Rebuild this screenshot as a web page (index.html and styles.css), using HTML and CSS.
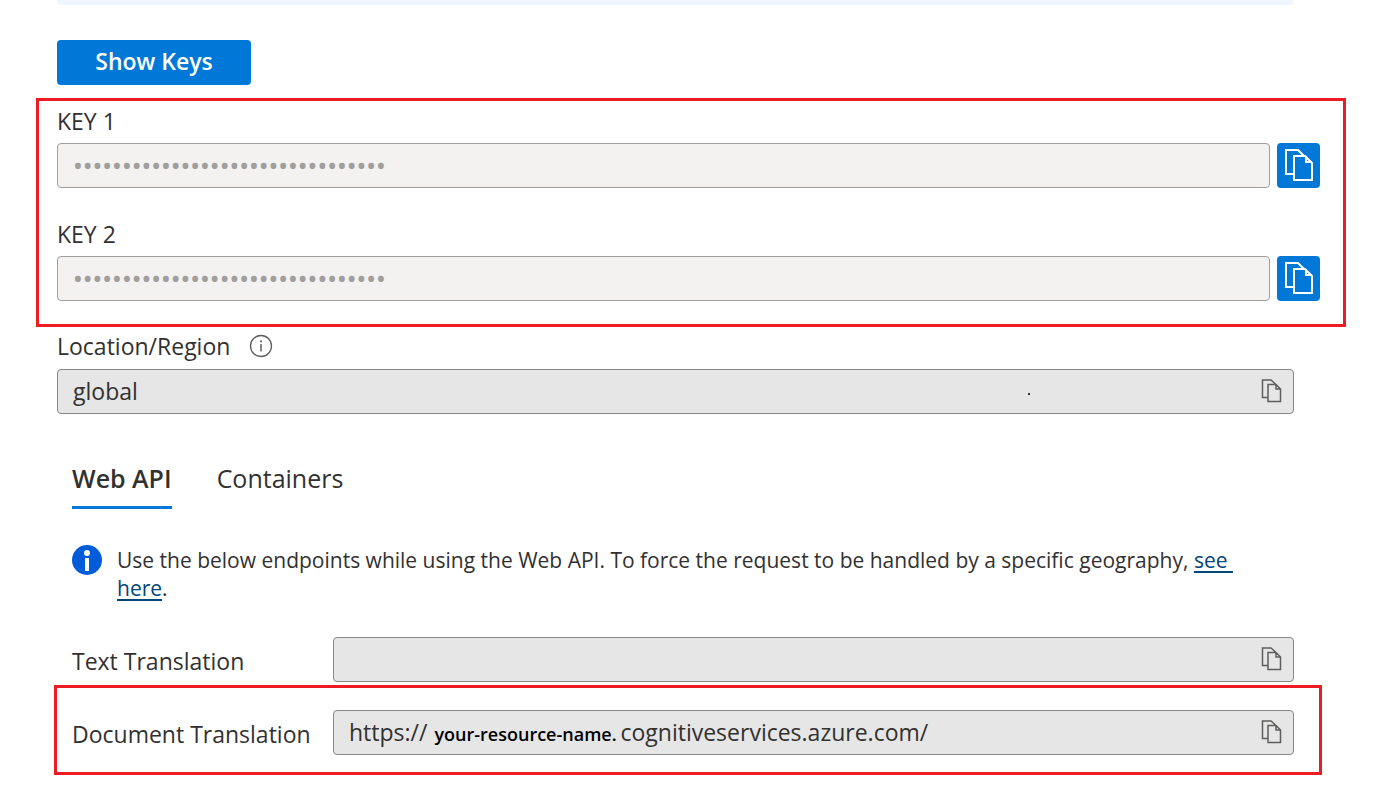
FILE: index.html
```html
<!DOCTYPE html>
<html lang="en">
<head>
<meta charset="utf-8">
<title>Keys and Endpoint</title>
<meta name="viewport" content="width=device-width, initial-scale=1">
<link rel="stylesheet" href="styles.css">
</head>
<body>
<svg class="sprite" aria-hidden="true">
  <symbol id="copy-large" viewBox="0 0 28 32">
    <path d="M8 25H1V1H13L19 7M9 7H20L27 14V31H9ZM21 7V13H27" fill="none" stroke="currentColor" stroke-width="2"/>
  </symbol>
  <symbol id="copy-small" viewBox="0 0 20 24">
    <path d="M6 18.500H1V1H9.500L14 5M6.500 5.500H14.500L19 10V22.500H6.500ZM14.500 5.500V10H19" fill="none" stroke="currentColor" stroke-width="1.500"/>
  </symbol>
</svg>
<main class="page">
  <div class="banner"></div>
  <button class="show-keys" type="button">Show Keys</button>

  <section class="keys">
    <label class="label" for="key1">KEY 1</label>
    <div class="key-row">
      <input class="key-input" id="key1" type="password" value="00000000000000000000000000000000" disabled>
      <button class="copy-key" type="button" aria-label="Copy key 1"><svg class="icon-large"><use href="#copy-large"/></svg></button>
    </div>
    <label class="label second" for="key2">KEY 2</label>
    <div class="key-row">
      <input class="key-input" id="key2" type="password" value="00000000000000000000000000000000" disabled>
      <button class="copy-key" type="button" aria-label="Copy key 2"><svg class="icon-large"><use href="#copy-large"/></svg></button>
    </div>
  </section>

  <section class="location">
    <div class="location-head">
      <label class="label" for="region">Location/Region</label>
      <svg class="hint" viewBox="0 0 24 24" aria-hidden="true"><circle cx="12" cy="12" r="10.500" fill="none" stroke="currentColor" stroke-width="1.300"/><circle cx="12" cy="7.300" r="1.100" fill="currentColor"/><path d="M12 10V17.500" stroke="currentColor" stroke-width="1.500"/></svg>
    </div>
    <div class="field">
      <input class="field-input" id="region" type="text" value="global" readonly>
      <span class="speck"></span>
      <button class="copy" type="button" aria-label="Copy region"><svg class="icon-small"><use href="#copy-small"/></svg></button>
    </div>
  </section>

  <nav class="tabs">
    <button class="tab active" type="button">Web API</button>
    <button class="tab" type="button">Containers</button>
  </nav>

  <div class="notice">
    <svg class="info" viewBox="0 0 30 30" aria-hidden="true"><circle cx="15" cy="15" r="15" fill="#015cda"/><circle cx="15" cy="8" r="3" fill="#fff"/><rect x="13" y="13" width="4" height="13" fill="#fff"/></svg>
    <p class="notice-text">Use the below endpoints while using the Web API. To force the request to be handled by a specific geography, <a class="link" href="#">see&nbsp;<br>here</a>.</p>
  </div>

  <div class="endpoint plain">
    <label class="endpoint-label" for="text-url">Text Translation</label>
    <div class="field">
      <input class="field-input" id="text-url" type="text" value="" readonly>
      <button class="copy" type="button" aria-label="Copy text endpoint"><svg class="icon-small"><use href="#copy-small"/></svg></button>
    </div>
  </div>
  <div class="endpoint marked">
    <label class="endpoint-label" for="doc-url">Document Translation</label>
    <div class="field">
      <span class="scheme">https://</span>
      <input class="resource" id="doc-url" type="text" value="your-resource-name." readonly>
      <span class="domain">cognitiveservices.azure.com/</span>
      <button class="copy" type="button" aria-label="Copy document endpoint"><svg class="icon-small"><use href="#copy-small"/></svg></button>
    </div>
  </div>
</main>
</body>
</html>
```
FILE: styles.css
```css
* { box-sizing: border-box; }
body {
  margin: 0;
  background: #fff;
  color: #323130;
  font: 23px/30px "Open Sans", "Noto Sans", sans-serif;
}
button, input { font: inherit; color: inherit; margin: 0; padding: 0; border: 0; background: none; }
button { cursor: pointer; }
.sprite { display: none; }
.page { padding: 0 35px 0 36px; }
.banner { height: 5px; margin: 0 52px 0 21px; background: #f0f6ff; border-radius: 0 0 4px 4px; }
.show-keys {
  display: block;
  width: 194px;
  height: 45px;
  margin: 35px 0 0 21px;
  padding-bottom: 4px;
  border-radius: 4px;
  background: #0078d7;
  color: #fff;
  font-weight: 600;
}
.keys { margin-top: 13px; padding: 6px 23px 23px 18px; border: 3px solid #ed1c24; }
.label { display: block; line-height: 28px; }
.second { margin-top: 32px; }
.key-row { display: flex; gap: 7px; margin-top: 8px; }
.key-input {
  flex: 1;
  min-width: 0;
  height: 45px;
  padding: 0 15px 2px;
  border: 1px solid #a19f9d;
  border-radius: 4px;
  background: #f3f2f1;
  color: #a19f9d;
  font-family: "Noto Sans", sans-serif;
  font-size: 26px;
}
.copy-key { display: grid; place-items: center; width: 43px; height: 45px; padding-bottom: 1px; border-radius: 4px; background: #0078d7; color: #fff; }
.icon-large { width: 28px; height: 32px; }
.location { margin: 5px 52px 0 21px; }
.location-head { display: flex; align-items: center; gap: 19px; margin-bottom: 9px; }
.hint { width: 24px; height: 24px; color: #605e5c; }
.field {
  display: flex;
  flex: 1;
  align-items: center;
  min-width: 0;
  height: 45px;
  padding: 0 11px 2px 15px;
  border: 1px solid #8a8886;
  border-radius: 4px;
  background: #e6e6e6;
}
.field-input { flex: 1; min-width: 0; height: 41px; }
.speck { width: 2px; height: 2px; margin: 7px 231px 0 0; background: #333; }
.copy { display: flex; margin-left: auto; color: #605e5c; }
.icon-small { width: 21px; height: 24px; }
.tabs { display: flex; gap: 45px; margin: 49px 0 0 36px; }
.tab { height: 46px; padding-bottom: 13px; border-bottom: 3px solid transparent; font-size: 25px; }
.active { border-color: #0078d7; font-weight: 600; }
.notice { display: flex; gap: 15px; margin: 36px 52px 0 36px; }
.info { flex: none; width: 30px; height: 30px; }
.notice-text { margin: 1px 0 0; font-size: 21px; line-height: 28px; }
.link { color: #004578; text-decoration-thickness: 2px; text-underline-offset: 3px; }
.endpoint { display: flex; align-items: center; }
.endpoint-label { flex: none; width: 261px; padding-top: 3px; }
.plain { margin: 35px 52px 0 36px; }
.marked { margin: 3px 24px 0 18px; padding: 22px 25px 17px 15px; border: 3px solid #ed1c24; }
.resource { width: 186px; margin-left: 7px; padding-top: 4px; color: #000; font-size: 18px; font-weight: 600; }
```
